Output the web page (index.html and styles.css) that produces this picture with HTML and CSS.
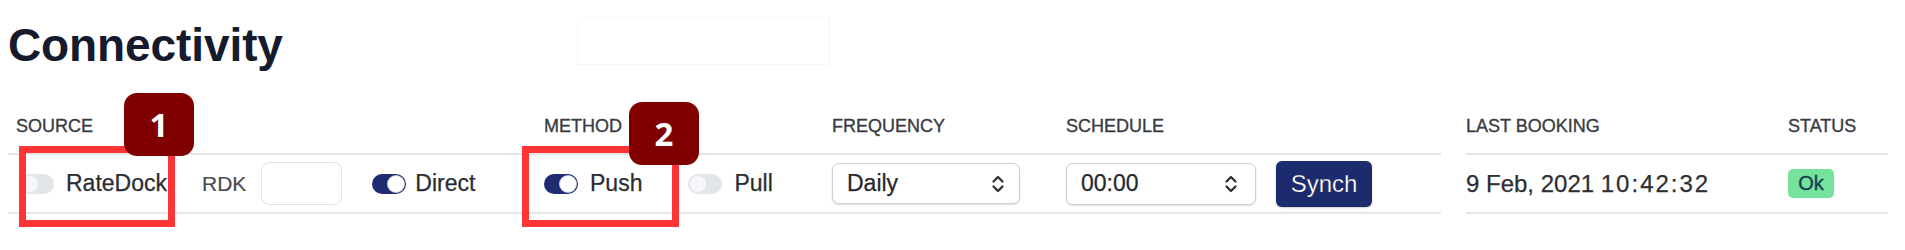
FILE: index.html
```html
<!DOCTYPE html>
<html lang="en">
<head>
<meta charset="utf-8">
<title>Connectivity</title>
<link rel="stylesheet" href="styles.css">
</head>
<body>
<div class="page">
  <header class="header">
    <h1 class="title">Connectivity</h1>
    <div class="ghost"></div>
  </header>

  <div class="tables">
    <div class="grid grid-main">
      <div class="th">SOURCE</div>
      <div class="th">METHOD</div>
      <div class="th">FREQUENCY</div>
      <div class="th">SCHEDULE</div>

      <div class="td">
        <span class="toggle toggle-off toggle-first"><span class="knob"></span></span>
        <span class="opt">RateDock</span>
        <span class="rdk">RDK</span>
        <span class="input"></span>
        <span class="toggle toggle-on toggle-direct"><span class="knob"></span></span>
        <span class="opt opt-tight">Direct</span>
      </div>
      <div class="td">
        <span class="toggle toggle-on"><span class="knob"></span></span>
        <span class="opt">Push</span>
        <span class="toggle toggle-off toggle-pull"><span class="knob"></span></span>
        <span class="opt">Pull</span>
      </div>
      <div class="td">
        <div class="select select-freq">
          <span>Daily</span>
          <svg class="chev" width="14" height="20" viewBox="0 0 14 20"><path d="M2.5 7.5 L7 3 L11.5 7.5 M2.5 12.5 L7 17 L11.5 12.5" fill="none" stroke="#2e3035" stroke-width="2.3" stroke-linecap="round" stroke-linejoin="round"/></svg>
        </div>
      </div>
      <div class="td">
        <div class="select select-time">
          <span>00:00</span>
          <svg class="chev" width="14" height="20" viewBox="0 0 14 20"><path d="M2.5 7.5 L7 3 L11.5 7.5 M2.5 12.5 L7 17 L11.5 12.5" fill="none" stroke="#2e3035" stroke-width="2.3" stroke-linecap="round" stroke-linejoin="round"/></svg>
        </div>
        <button class="btn">Synch</button>
      </div>
    </div>

    <div class="grid grid-side">
      <div class="th">LAST BOOKING</div>
      <div class="th">STATUS</div>
      <div class="td"><span class="date">9 Feb, 2021 <span class="time">10:42:32</span></span></div>
      <div class="td"><span class="ok">Ok</span></div>
    </div>
  </div>

  <div class="mark mark-1"></div>
  <div class="badge badge-1">1</div>
  <div class="mark mark-2"></div>
  <div class="badge badge-2">2</div>
</div>
</body>
</html>
```

FILE: styles.css
```css
* { box-sizing: border-box; }

html, body {
  margin: 0;
  padding: 0;
  background: #ffffff;
}

body {
  font-family: "Liberation Sans", Arial, sans-serif;
  color: #2b2d33;
}

.page {
  position: relative;
  width: 1905px;
  height: 250px;
  padding-left: 8px;
  overflow: hidden;
}

.header {
  display: grid;
  grid-template-columns: 569px 253px;
  align-items: start;
  height: 68px;
}

.title {
  margin: 22px 0 0 0;
  font-size: 46px;
  line-height: 46px;
  font-weight: 700;
  color: #151a2c;
  letter-spacing: -0.1px;
}

.ghost {
  margin-top: 17px;
  height: 48px;
  border: 1px solid #f6f6f6;
  border-radius: 2px;
}

.tables {
  display: flex;
  gap: 25px;
  margin-top: 49px;
}

.grid {
  display: grid;
  grid-template-rows: 36px 61px;
}

.grid-main {
  grid-template-columns: 528px 288px 234px 383px;
}

.grid-side {
  grid-template-columns: 322px 100px;
}

.th {
  font-size: 18px;
  line-height: 18px;
  color: #383b43;
  padding-left: 8px;
  -webkit-text-stroke: 0.35px #383b43;
}

.grid-side .th { padding-left: 0; }

.td {
  display: flex;
  align-items: center;
  padding-left: 8px;
  border-top: 2px solid #e6e6e8;
  border-bottom: 2px solid #e6e6e8;
  font-size: 23px;
  color: #2a2c32;
  -webkit-text-stroke: 0.25px #2a2c32;
}

.grid-side .td { padding-left: 0; }

/* toggles */
.toggle {
  position: relative;
  display: inline-block;
  width: 34px;
  height: 20px;
  border-radius: 10px;
  flex: none;
}

.toggle .knob {
  position: absolute;
  top: 2px;
  width: 16px;
  height: 16px;
  border-radius: 50%;
  background: #ffffff;
}

.toggle-on {
  background: #1f2c74;
}

.toggle-on .knob {
  right: 2px;
  box-shadow: 0 0 0 1px #c9ccd6;
}

.toggle-off {
  background: #e2e5ea;
}

.toggle-off .knob {
  left: 2px;
  background: #f6f7f9;
}

.toggle-first { margin-left: 4px; }
.toggle-direct { margin-left: 30px; }
.toggle-pull { margin-left: 46px; }

.opt {
  margin-left: 12px;
}

.opt-tight { margin-left: 9px; }

.rdk {
  margin-left: 35px;
  font-size: 21px;
  color: #4a4c52;
  -webkit-text-stroke: 0.2px #4a4c52;
}

.input {
  display: inline-block;
  margin-left: 15px;
  width: 81px;
  height: 43px;
  border: 1px solid #e2e2e4;
  border-radius: 8px;
  background: #ffffff;
}

/* selects */
.select {
  display: flex;
  align-items: center;
  justify-content: space-between;
  height: 41px;
  border: 1px solid #cfd0d3;
  border-radius: 7px;
  background: #ffffff;
  box-shadow: 0 1px 2px rgba(0, 0, 0, 0.14);
  font-size: 23px;
  color: #26282d;
}

.select-freq {
  width: 188px;
  padding: 0 14px 0 14px;
}

.select-time {
  width: 190px;
  height: 42px;
  padding: 0 17px 0 14px;
}

.chev { display: block; }

.btn {
  margin-left: 20px;
  width: 96px;
  height: 46px;
  border: none;
  border-radius: 6px;
  background: #1c2a6e;
  color: #ffffff;
  font-family: "Liberation Sans", Arial, sans-serif;
  font-size: 24px;
  padding: 0;
  box-shadow: 0 1px 2px rgba(0, 0, 0, 0.2);
}

.date {
  font-size: 24px;
  color: #2d2f34;
}

.time {
  letter-spacing: 2px;
}

.ok {
  display: inline-block;
  width: 46px;
  height: 29px;
  line-height: 29px;
  text-align: center;
  border-radius: 5px;
  background: #74e39b;
  color: #173f52;
  font-size: 20px;
  -webkit-text-stroke: 0.4px #173f52;
}

/* annotations */
.mark {
  position: absolute;
  top: 146px;
  height: 81px;
  border: 7px solid #ff3535;
}

.mark-1 { left: 19px; width: 156px; }
.mark-2 { left: 522px; width: 157px; }

.badge {
  position: absolute;
  width: 70px;
  height: 63px;
  border-radius: 13px;
  background: #800000;
  color: #ffffff;
  font-family: "Open Sans", "Noto Sans", sans-serif;
  font-weight: 700;
  font-size: 33px;
  line-height: 63px;
  text-align: center;
  -webkit-text-stroke: 0;
}

.badge-1 { left: 124px; top: 93px; }
.badge-2 { left: 629px; top: 102px; }
```
